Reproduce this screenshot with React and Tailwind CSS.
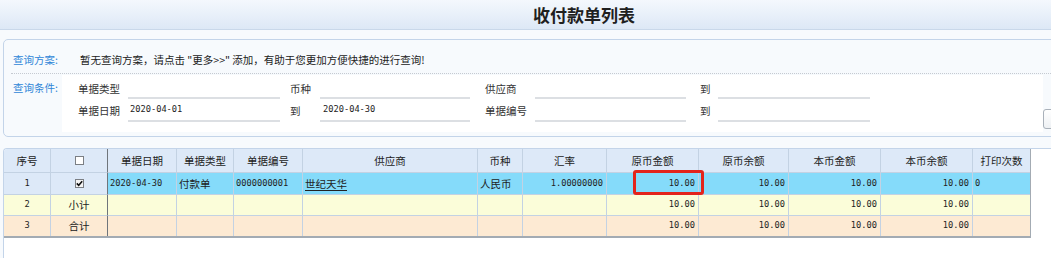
import React from "react";

const cjk = "font-['Noto_Sans_CJK_SC',sans-serif]";
const mono = "font-['DejaVu_Sans_Mono',monospace]";

const cols = [47, 57, 69, 57, 69, 175, 45, 84, 92, 90, 92, 92, 57];

function Check({ checked, bg }) {
  return (
    <div className={"w-[9px] h-[9px] border border-[#7b7f84] flex items-center justify-center " + (bg ? "bg-[#f4f4f4]" : "bg-white")}>
      {checked && (
        <svg width="7" height="7" viewBox="0 0 7 7">
          <path d="M0.8 3.4 L2.7 5.3 L6.2 1.3" stroke="#111" strokeWidth="1.6" fill="none" />
        </svg>
      )}
    </div>
  );
}

function Cell({ i, children, align = "left", rowBg, frozenBg, last, noBottom, className = "" }) {
  const w = cols[i];
  const bg = i < 2 && frozenBg ? frozenBg : rowBg;
  const borderR = i === 1 ? "border-r border-r-[#6f757b]" : last ? "" : "border-r border-r-[#c3d2e3]";
  const borderB = noBottom ? "" : "border-b border-b-[#c3d2e3]";
  const al = align === "right" ? "justify-end pr-[3px]" : align === "center" ? "justify-center" : "justify-start pl-[2px]";
  return (
    <div
      style={{ width: w, backgroundColor: bg }}
      className={"flex items-center shrink-0 overflow-hidden whitespace-nowrap " + borderR + " " + borderB + " " + al + " " + className}
    >
      {children}
    </div>
  );
}

const headers = ["序号", "", "单据日期", "单据类型", "单据编号", "供应商", "币种", "汇率", "原币金额", "原币余额", "本币金额", "本币余额", "打印次数"];

function Field({ label, lw, ml, iw, value, vpl }) {
  return (
    <>
      <div style={{ width: lw, marginLeft: ml }} className="shrink-0 text-[#333]">{label}</div>
      <div style={{ width: iw }} className="shrink-0 h-full border-b-2 border-[#dcdfe3] flex items-center">
        {value && <span style={{ paddingLeft: vpl }} className={mono + " text-[8.7px] text-[#222]"}>{value}</span>}
      </div>
    </>
  );
}

export default function App() {
  const rows = [
    {
      bg: "#85dbfa",
      frozen: "#dde9f8",
      h: "h-[22px]",
      cells: [
        { c: <span className={mono + " text-[8.7px]"}>1</span>, a: "center" },
        { c: <Check checked bg />, a: "center" },
        { c: <span className={mono + " text-[8.7px]"}>2020-04-30</span> },
        { c: <span>付款单</span> },
        { c: <span className={mono + " text-[8.7px]"}>0000000001</span> },
        { c: <span className="underline underline-offset-2">世纪天华</span> },
        { c: <span>人民币</span> },
        { c: <span className={mono + " text-[8.7px]"}>1.00000000</span>, a: "right" },
        { c: <span className={mono + " text-[8.7px]"}>10.00</span>, a: "right", pr: true },
        { c: <span className={mono + " text-[8.7px]"}>10.00</span>, a: "right" },
        { c: <span className={mono + " text-[8.7px]"}>10.00</span>, a: "right" },
        { c: <span className={mono + " text-[8.7px]"}>10.00</span>, a: "right" },
        { c: <span className={mono + " text-[8.7px]"}>0</span> },
      ],
    },
    {
      bg: "#fbfdd9",
      h: "h-[21px]",
      cells: [
        { c: <span className={mono + " text-[8.7px]"}>2</span>, a: "center" },
        { c: <span>小计</span>, a: "center" },
        {}, {}, {}, {}, {}, {},
        { c: <span className={mono + " text-[8.7px]"}>10.00</span>, a: "right" },
        { c: <span className={mono + " text-[8.7px]"}>10.00</span>, a: "right" },
        { c: <span className={mono + " text-[8.7px]"}>10.00</span>, a: "right" },
        { c: <span className={mono + " text-[8.7px]"}>10.00</span>, a: "right" },
        {},
      ],
    },
    {
      bg: "#fdead3",
      h: "h-[20px]",
      last: true,
      cells: [
        { c: <span className={mono + " text-[8.7px]"}>3</span>, a: "center" },
        { c: <span>合计</span>, a: "center" },
        {}, {}, {}, {}, {}, {},
        { c: <span className={mono + " text-[8.7px]"}>10.00</span>, a: "right" },
        { c: <span className={mono + " text-[8.7px]"}>10.00</span>, a: "right" },
        { c: <span className={mono + " text-[8.7px]"}>10.00</span>, a: "right" },
        { c: <span className={mono + " text-[8.7px]"}>10.00</span>, a: "right" },
        {},
      ],
    },
  ];

  return (
    <div className={"w-[1051px] h-[258px] overflow-hidden bg-[#f7fafd] relative flex flex-col text-[10.5px] text-[#222] " + cjk}>
      {/* Title bar */}
      <div className="h-[30px] shrink-0 border-b border-[#c9d8ea] bg-gradient-to-b from-[#f4f8fd] to-[#dde8f6] pl-[533px] flex items-center">
        <span className="text-[17px] font-bold text-[#1f1f1f] leading-none">收付款单列表</span>
      </div>

      {/* Query panel */}
      <div className="mt-[9px] ml-[3px] w-[1070px] h-[98px] shrink-0 border border-[#c3d4e9] rounded-[5px] bg-[#f7fafd] flex flex-col">
        <div className="h-[33px] pt-[7px] flex items-center">
          <div className="w-[76px] pl-[9px] text-[#2f86d8] shrink-0">查询方案:</div>
          <div className="text-[#222]">{'暂无查询方案，请点击 "更多>>" 添加，有助于您更加方便快捷的进行查询!'}</div>
        </div>
        <div className="mx-[7px] border-t border-dotted border-[#c5cad1]"></div>
        <div className="flex flex-1">
          <div className="w-[58px] pl-[9px] pt-[7px] text-[#2f86d8] shrink-0 leading-[14px]">查询条件:</div>
          <div className="flex flex-col">
            <div className="mt-[1px] w-[981px] h-[57px] bg-white flex flex-col">
              <div className="mt-[3px] h-[21px] flex items-center">
                <Field label="单据类型" lw={50} ml={16} iw={152} />
                <Field label="币种" lw={30} ml={10} iw={150} />
                <Field label="供应商" lw={50} ml={15} iw={151} />
                <Field label="到" lw={18} ml={14} iw={152} />
              </div>
              <div className="mt-[1px] h-[22px] flex items-center">
                <Field label="单据日期" lw={50} ml={16} iw={152} value="2020-04-01" vpl={2} />
                <Field label="到" lw={30} ml={10} iw={150} value="2020-04-30" vpl={3} />
                <Field label="单据编号" lw={50} ml={15} iw={151} />
                <Field label="到" lw={18} ml={14} iw={152} />
              </div>
            </div>
          </div>
          <div className="mt-[35px] w-[24px] h-[20px] border border-[#a9b1ba] rounded-[3px] bg-gradient-to-b from-white to-[#eef1f4] shrink-0"></div>
        </div>
      </div>

      {/* Table container */}
      <div className="mt-[11px] ml-[3px] flex-1 bg-white border-t border-l border-[#c3d4e9] rounded-tl-[4px] overflow-hidden">
        <div className="w-[1027px] border-r border-b-2 border-[#a3abb3] text-[10.5px]">
          {/* header */}
          <div className="flex h-[24px]">
            {headers.map((h, i) => (
              <Cell key={i} i={i} rowBg="#dde9f8" align="center" last={i === 12} className="text-[#222]">
                {i === 1 ? <Check /> : h}
              </Cell>
            ))}
          </div>
          {rows.map((r, ri) => (
            <div key={ri} className={"flex " + r.h}>
              {r.cells.map((c, i) => (
                <Cell key={i} i={i} rowBg={r.bg} frozenBg={r.frozen} align={c.a || "left"} last={i === 12} noBottom={r.last}>
                  {c.c}
                </Cell>
              ))}
            </div>
          ))}
        </div>
      </div>

      {/* red annotation box */}
      <div className="absolute left-[633px] top-[170px] w-[71px] h-[25px] border-[3px] border-[#e3241b] rounded-[3px] pointer-events-none"></div>
    </div>
  );
}
